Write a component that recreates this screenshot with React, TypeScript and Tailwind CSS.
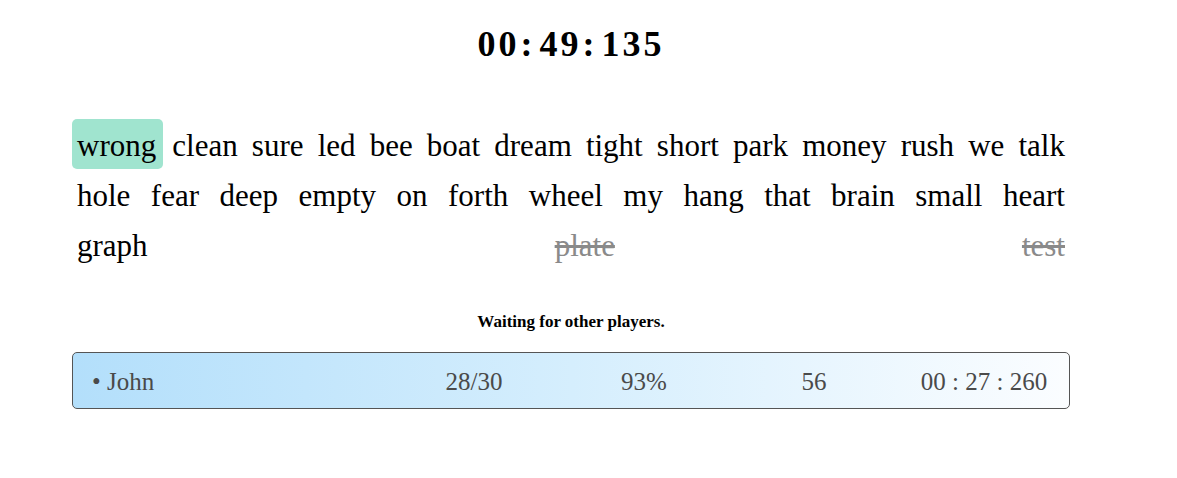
import React from "react";

const serif = { fontFamily: '"Liberation Serif", "Times New Roman", serif' };

type W = { t: string; hl?: boolean; strike?: boolean };

const lines: W[][] = [
  [
    { t: "wrong", hl: true },
    { t: "clean" },
    { t: "sure" },
    { t: "led" },
    { t: "bee" },
    { t: "boat" },
    { t: "dream" },
    { t: "tight" },
    { t: "short" },
    { t: "park" },
    { t: "money" },
    { t: "rush" },
    { t: "we" },
    { t: "talk" },
  ],
  "hole fear deep empty on forth wheel my hang that brain small heart"
    .split(" ")
    .map((t) => ({ t })),
  [{ t: "graph" }, { t: "plate", strike: true }, { t: "test", strike: true }],
];

export default function App() {
  return (
    <div className="min-h-screen bg-white text-black" style={serif}>
      <div className="ml-[72px] w-[998px] pt-[24px]">
        <div className="flex justify-center text-[36px] leading-[40px] font-bold">
          <span className="tracking-[3px]">00</span>
          <span className="ml-[1px] mr-[7px]">:</span>
          <span className="tracking-[3px]">49</span>
          <span className="ml-[1px] mr-[7px]">:</span>
          <span className="tracking-[3px]">135</span>
        </div>

        <div className="mt-[55px] text-[31px]">
          {lines.map((line, i) => (
            <div key={i} className="flex justify-between h-[50px]">
              {line.map((w, j) => (
                <span
                  key={j}
                  className={
                    "inline-block h-[50px] pt-[3px] leading-[47px] px-[5px] rounded-[5px] " +
                    (w.hl ? "bg-[#a0e4cf] pr-[7px] " : "") +
                    (w.strike ? "line-through text-[#8a8a8a] decoration-[#8a8a8a]" : "")
                  }
                >
                  {w.t}
                </span>
              ))}
            </div>
          ))}
        </div>

        <div className="mt-[42px] text-center text-[17px] leading-[22px] font-bold">
          Waiting for other players.
        </div>

        <div className="mt-[19px] h-[57px] flex items-center border border-[#555] rounded-[5px] bg-gradient-to-r from-[#b3dffb] via-[#d5eefd] to-[#fbfdff] text-[25px] text-[#4a4a4a]">
          <div className="flex-1 pl-[19px] pt-[2px]">• John</div>
          <div className="w-[170px] text-center pt-[2px]">28/30</div>
          <div className="w-[170px] text-center pt-[2px]">93%</div>
          <div className="w-[170px] text-center pt-[2px]">56</div>
          <div className="w-[170px] text-center pt-[2px]">00 : 27 : 260</div>
        </div>
      </div>
    </div>
  );
}
